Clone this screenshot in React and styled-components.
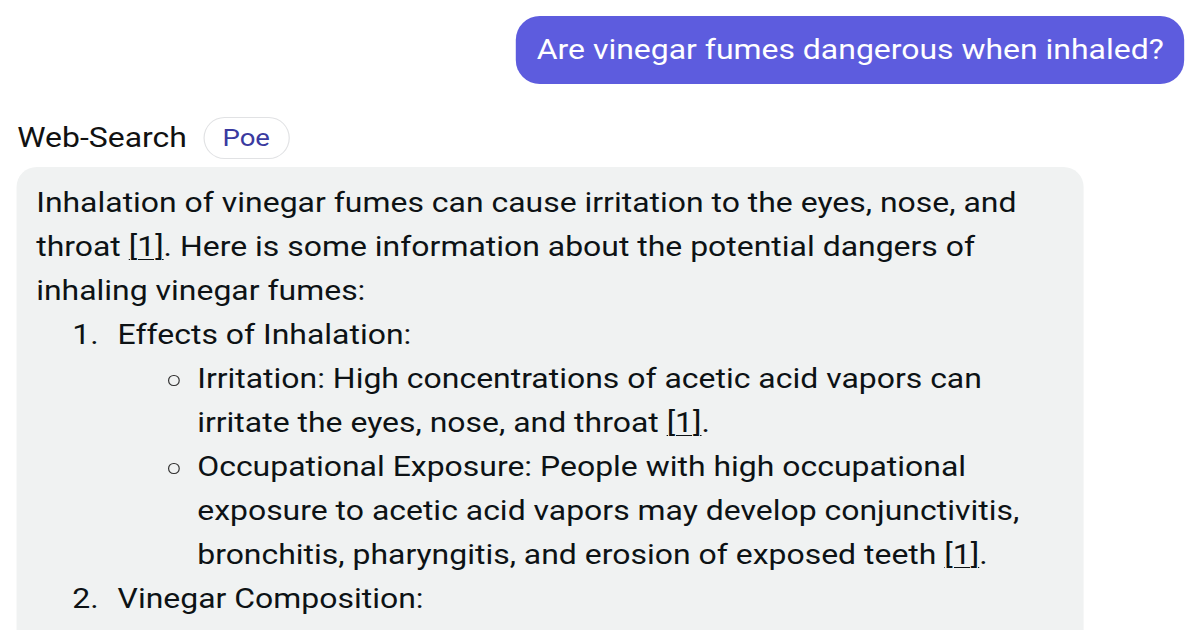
import React from 'react';
import styled, { createGlobalStyle } from 'styled-components';

// the capture is stretched ~1.18x horizontally, so the page is laid out
// narrow and widened with one scaleX on the wrapper
const STRETCH = 1.183;

const GlobalStyle = createGlobalStyle`
  html, body {
    margin: 0;
    padding: 0;
    background: #ffffff;
    overflow: hidden;
  }
  body {
    font-family: Roboto, "Noto Sans", sans-serif;
    color: #0d1215;
  }
`;

const Page = styled.div`
  width: ${1200 / STRETCH}px;
  height: 630px;
  overflow: hidden;
  padding: 16px 13.6px 0 13.6px;
  box-sizing: border-box;
  display: flex;
  flex-direction: column;
  transform: scaleX(${STRETCH});
  transform-origin: 0 0;
`;

const UserRow = styled.div`
  display: flex;
  justify-content: flex-end;
`;

const UserBubble = styled.div`
  background: #5d5cde;
  color: #ffffff;
  border-radius: 20.3px / 24px;
  height: 68px;
  padding: 0 17px 0 17.8px;
  display: flex;
  align-items: center;
  font-size: 27px;
`;

const BotHeader = styled.div`
  display: flex;
  align-items: center;
  gap: 13.5px;
  margin-top: 33px;
  height: 42px;
  padding-left: 1px;
`;

const BotName = styled.span`
  font-size: 27px;
  color: #111111;
`;

const Tag = styled.span`
  font-size: 23.3px;
  color: #3a3aa0;
  border: 1.5px solid #e1e2e4;
  border-radius: 17.8px / 21px;
  height: 42px;
  box-sizing: border-box;
  padding: 0 15.5px;
  display: flex;
  align-items: center;
`;

const BotBubble = styled.div`
  margin-top: 8px;
  width: ${1067 / STRETCH}px;
  flex: 1;
  background: #f0f2f2;
  border-radius: 17px 17px 0 0 / 20px 20px 0 0;
  padding: 14px 17px 0 17px;
  box-sizing: border-box;
  font-size: 27px;
  line-height: 44px;
`;

const Para = styled.p`
  margin: 0;
`;

const NumList = styled.div`
  display: flex;
  flex-direction: column;
  padding-left: 30.5px;
`;

const NumItem = styled.div`
  display: flex;
`;

const Num = styled.span`
  flex: 0 0 38.3px;
`;

const ItemBody = styled.div`
  flex: 1;
`;

const BulletList = styled.div`
  display: flex;
  flex-direction: column;
  padding-left: 42.8px;
`;

const BulletItem = styled.div`
  display: flex;
`;

const BulletMark = styled.span`
  flex: 0 0 24.5px;
  height: 44px;
  display: flex;
  align-items: center;
  &::before {
    content: '';
    width: 7.4px;
    height: 9px;
    border: 1.3px solid #333;
    border-radius: 50%;
    margin-top: 2px;
  }
`;

const Cite = styled.span`
  text-decoration: underline;
  text-underline-offset: 3px;
  text-decoration-thickness: 1px;
`;

export default function App() {
  return (
    <>
      <GlobalStyle />
      <Page>
        <UserRow>
          <UserBubble>Are vinegar fumes dangerous when inhaled?</UserBubble>
        </UserRow>
        <BotHeader>
          <BotName>Web-Search</BotName>
          <Tag>Poe</Tag>
        </BotHeader>
        <BotBubble>
          <Para>
            Inhalation of vinegar fumes can cause irritation to the eyes, nose, and
            throat <Cite>[1]</Cite>. Here is some information about the potential dangers of
            inhaling vinegar fumes:
          </Para>
          <NumList>
            <NumItem>
              <Num>1.</Num>
              <ItemBody>
                Effects of Inhalation:
                <BulletList>
                  <BulletItem>
                    <BulletMark />
                    <ItemBody>
                      Irritation: High concentrations of acetic acid vapors can irritate
                      the eyes, nose, and throat <Cite>[1]</Cite>.
                    </ItemBody>
                  </BulletItem>
                  <BulletItem>
                    <BulletMark />
                    <ItemBody>
                      Occupational Exposure: People with high occupational exposure to
                      acetic acid vapors may develop conjunctivitis, bronchitis,
                      pharyngitis, and erosion of exposed teeth <Cite>[1]</Cite>.
                    </ItemBody>
                  </BulletItem>
                </BulletList>
              </ItemBody>
            </NumItem>
            <NumItem>
              <Num>2.</Num>
              <ItemBody>Vinegar Composition:</ItemBody>
            </NumItem>
          </NumList>
        </BotBubble>
      </Page>
    </>
  );
}
